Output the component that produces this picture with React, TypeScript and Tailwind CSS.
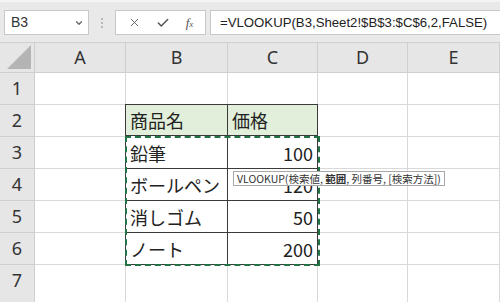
import { X, Check, ChevronDown } from 'lucide-react'

const font = { fontFamily: '"Noto Sans CJK JP", "Noto Sans", sans-serif' }

const cols = ['A', 'B', 'C', 'D', 'E']
const rows = [1, 2, 3, 4, 5, 6, 7]

type Cell = { text: string; align?: 'left' | 'right'; head?: boolean }

const data: Record<string, Cell> = {
  B2: { text: '商品名', head: true },
  C2: { text: '価格', head: true },
  B3: { text: '鉛筆' },
  C3: { text: '100', align: 'right' },
  B4: { text: 'ボールペン' },
  C4: { text: '120', align: 'right' },
  B5: { text: '消しゴム' },
  C5: { text: '50', align: 'right' },
  B6: { text: 'ノート' },
  C6: { text: '200', align: 'right' },
}

function cellClass(col: string, row: number) {
  const inTable = (col === 'B' || col === 'C') && row >= 2 && row <= 6
  let cls = (row === 7 ? 'h-[40px] ' : 'h-[32px] ') + 'flex items-center px-[4px] border-b border-r '
  if (inTable) {
    cls += 'border-[#3a3a3a] '
    if (col === 'B') cls += 'border-l border-l-[#3a3a3a] -ml-px '
    if (row === 2) cls += 'border-t border-t-[#3a3a3a] -mt-px '
  } else {
    cls += 'border-[#d9d9d9] '
  }
  return cls
}

export default function App() {
  return (
    <div className="w-[500px] h-[302px] overflow-hidden bg-white relative text-[#222]" style={font}>
      {/* formula bar */}
      <div className="h-[43px] bg-[#e9e9e9] border-t-2 border-[#f4f4f4] flex items-start pt-[8px] pl-[4px] border-b border-b-[#d0d0d0]">
        <div className="w-[85px] h-[25px] bg-white border border-[#c8c8c8] flex items-center justify-between pl-[6px] pr-[4px] text-[14px] text-[#333]" style={{ fontFamily: '"Liberation Sans", sans-serif' }}>
          <span>B3</span>
          <ChevronDown className="w-[10px] h-[10px] text-[#666]" strokeWidth={3} />
        </div>
        <div className="w-[26px] h-[25px] flex flex-col items-center justify-center gap-[2px]">
          <span className="w-[2px] h-[2px] bg-[#b8b8b8]" />
          <span className="w-[2px] h-[2px] bg-[#b8b8b8]" />
          <span className="w-[2px] h-[2px] bg-[#b8b8b8]" />
        </div>
        <div className="w-[91px] h-[25px] bg-white border border-[#c8c8c8] flex items-center justify-around px-[4px] text-[#555]">
          <X className="w-[13px] h-[13px]" strokeWidth={1.6} />
          <Check className="w-[14px] h-[14px]" strokeWidth={2.6} />
          <span className="italic text-[13px]" style={{ fontFamily: '"Liberation Serif", serif' }}>
            f<span className="text-[9px]">x</span>
          </span>
        </div>
        <div className="ml-[4px] flex-1 h-[25px] bg-white border border-[#c8c8c8] border-r-0 flex items-center pl-[9px] text-[13.2px] text-[#222]" style={{ fontFamily: '"Liberation Sans", sans-serif' }}>
          =VLOOKUP(B3,Sheet2!$B$3:$C$6,2,FALSE)
        </div>
      </div>

      {/* grid */}
      <div className="grid grid-cols-[35px_91px_102px_90px_90px_92px]">
        <div className="h-[30px] bg-[#e6e6e6] border-r border-b border-[#cfcfcf] flex items-end justify-end p-[3px]">
          <div className="w-0 h-0 border-l-[24px] border-l-transparent border-b-[24px] border-b-[#b4b4b4]" />
        </div>
        {cols.map((c) => (
          <div key={c} className="h-[30px] bg-[#e6e6e6] border-r border-b border-[#cfcfcf] flex items-center justify-center text-[18px] text-[#333]" style={{ fontFamily: '"Noto Sans", sans-serif' }}>
            {c}
          </div>
        ))}
        {rows.map((r) => (
          <div key={r} className="contents">
            <div className={(r === 7 ? 'h-[40px] pb-[8px] ' : 'h-[32px] ') + 'bg-[#e6e6e6] border-r border-b border-[#cfcfcf] flex items-center justify-center text-[18px] text-[#333]'} style={{ fontFamily: '"Noto Sans", sans-serif' }}>
              {r}
            </div>
            {cols.map((c) => {
              const cell = data[c + r]
              return (
                <div
                  key={c}
                  className={cellClass(c, r) + (cell?.head ? 'bg-[#e2efda] ' : '') + (cell?.align === 'right' ? 'justify-end ' : '')}
                >
                  {cell && <span className="text-[18px] leading-none">{cell.text}</span>}
                </div>
              )
            })}
          </div>
        ))}
      </div>

      {/* copy marquee */}
      <div className="absolute left-[125px] top-[136px] w-[195px] h-[130px] border-2 border-dashed border-[#217346] pointer-events-none" />

      {/* function tooltip */}
      <div className="absolute left-[233px] top-[171px] h-[15px] px-[3px] bg-white border border-[#a8a8a8] flex items-center text-[10.5px] text-[#333] whitespace-pre">
        <span>VLOOKUP(検索値, </span>
        <span className="font-semibold">範囲</span>
        <span>, 列番号, [検索方法])</span>
      </div>
    </div>
  )
}
